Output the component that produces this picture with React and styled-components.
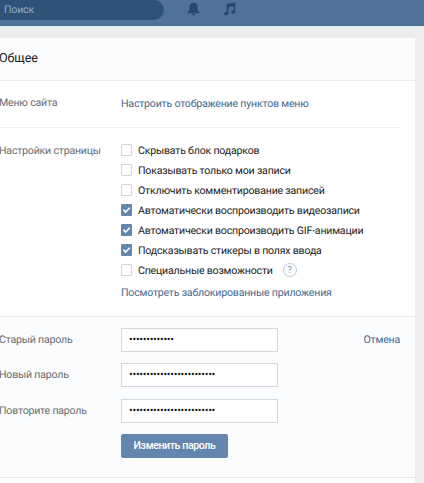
import React from "react";
import styled, { createGlobalStyle } from "styled-components";

const options = [
  { label: "Скрывать блок подарков" },
  { label: "Показывать только мои записи" },
  { label: "Отключить комментирование записей" },
  { label: "Автоматически воспроизводить видеозаписи", checked: true },
  { label: "Автоматически воспроизводить GIF-анимации", checked: true },
  { label: "Подсказывать стикеры в полях ввода", checked: true },
  { label: "Специальные возможности", help: true },
];

const App = () => {
  return (
    <>
      <GlobalStyle />
      <Page>
        <Topbar>
          <Search>Поиск</Search>
          <BellIcon viewBox="0 0 14 14">
            <path d="M7 0.2c-3 0-4.4 2.1-4.4 4.6v3L0.5 10.6v0.9h13v-0.9l-2.1-2.8v-3C11.4 2.3 10 0.2 7 0.2zM5 12.2c.3 1.2 1.1 1.7 2 1.7s1.7-.5 2-1.7z" />
          </BellIcon>
          <MusicIcon viewBox="0 0 14 14">
            <path d="M4 1.3 13.2 0v9.6c0 1.5-1 2.5-2.5 2.5-1.2 0-2-.7-2-1.7 0-1.2 1-2 2.5-2.1V4.2L6 5v6.3c0 1.6-1.1 2.6-2.7 2.6-1.2 0-2.1-.7-2.1-1.7 0-1.3 1.1-2.1 2.8-2.2z" />
          </MusicIcon>
        </Topbar>
        <Panel>
          <PanelHeader>Общее</PanelHeader>
          <MenuRow>
            <Label>Меню сайта</Label>
            <Link href="#">Настроить отображение пунктов меню</Link>
          </MenuRow>
          <SettingsRow>
            <Label>Настройки страницы</Label>
            <Options>
              {options.map((option) => (
                <Option key={option.label}>
                  <Checkbox $checked={option.checked}>
                    {option.checked && (
                      <svg viewBox="0 0 12 12">
                        <path d="M2.6 5.6 5 8.2 9.6 3.6" />
                      </svg>
                    )}
                  </Checkbox>
                  <OptionText>{option.label}</OptionText>
                  {option.help && <Help>?</Help>}
                </Option>
              ))}
              <BlockedLink href="#">Посмотреть заблокированные приложения</BlockedLink>
            </Options>
          </SettingsRow>
          <PasswordSection>
            <Field $gap={11}>
              <Label>Старый пароль</Label>
              <Input>{"•".repeat(13)}</Input>
              <Cancel href="#">Отмена</Cancel>
            </Field>
            <Field $gap={12}>
              <Label>Новый пароль</Label>
              <Input>{"•".repeat(25)}</Input>
            </Field>
            <Field $gap={11}>
              <Label>Повторите пароль</Label>
              <Input>{"•".repeat(25)}</Input>
            </Field>
            <Button>Изменить пароль</Button>
          </PasswordSection>
        </Panel>
      </Page>
    </>
  );
};

const GlobalStyle = createGlobalStyle`
  * {
    box-sizing: border-box;
  }

  body {
    margin: 0;
    background-color: #ebedef;
  }
`;

const Page = styled.div`
  width: 424px;
  height: 483px;
  overflow: hidden;
  background-color: #ebedef;
  font-family: Roboto, sans-serif;
  font-size: 10.6px;
  letter-spacing: -0.21px;
  line-height: 14px;
  color: #222;
  text-rendering: geometricPrecision;
  white-space: nowrap;
`;

const Topbar = styled.header`
  display: flex;
  align-items: flex-start;
  height: 26px;
  background-color: #507299;
`;

const Search = styled.div`
  width: 164px;
  height: 20px;
  padding: 3px 0 0 4px;
  border-radius: 0 10px 10px 0;
  background-color: #2f5278;
  color: #91adca;
`;

const BellIcon = styled.svg`
  width: 13px;
  height: 14px;
  margin: 2px 0 0 23px;
  fill: #27496f;
`;

const MusicIcon = styled.svg`
  width: 13px;
  height: 14px;
  margin: 2px 0 0 23px;
  fill: #27496f;
`;

const Panel = styled.main`
  width: 415px;
  height: 445px;
  margin-top: 12px;
  background-color: #fff;
`;

const PanelHeader = styled.h1`
  height: 43px;
  margin: 0;
  padding: 13px 0 0 0;
  border-bottom: 1px solid #e9ebee;
  background-color: #fafcfe;
  font-size: 12.6px;
  font-weight: 400;
  letter-spacing: -0.1px;
  line-height: 16px;
  text-indent: -1px;
`;

const Label = styled.div`
  width: 121px;
  flex: none;
  color: #686c70;
  text-indent: -1px;
`;

const Link = styled.a`
  color: #45688e;
  text-decoration: none;
`;

const MenuRow = styled.div`
  display: flex;
  height: 47px;
  margin-right: 15px;
  padding-top: 15px;
  border-bottom: 1px solid #eeeff1;

  ${Link} {
    padding-top: 1px;
  }
`;

const SettingsRow = styled.div`
  display: flex;
  height: 188px;
  padding-top: 12px;

  > ${Label} {
    padding-top: 4px;
  }
`;

const Options = styled.div`
  display: flex;
  flex-direction: column;
  align-items: flex-start;
`;

const Option = styled.label`
  display: flex;
  align-items: center;
  height: 20px;
`;

const OptionText = styled.span`
  padding-top: 2px;
`;

const Checkbox = styled.span`
  width: 11px;
  height: 12px;
  margin-right: 6px;
  border: 1px solid ${(props) => (props.$checked ? "#6287ae" : "#d2d7dc")};
  border-radius: 1px;
  background-color: ${(props) => (props.$checked ? "#6287ae" : "#fff")};

  svg {
    display: block;
    width: 11px;
    height: 12px;
    margin: -1px;
    fill: none;
    stroke: #fff;
    stroke-width: 1.7;
  }
`;

const Help = styled.span`
  width: 14px;
  height: 14px;
  margin-left: 10px;
  border: 1px solid #bac7d4;
  border-radius: 50%;
  color: #8299b1;
  font-size: 10px;
  letter-spacing: 0;
  line-height: 13px;
  text-align: center;
`;

const BlockedLink = styled(Link)`
  margin-top: 6px;
`;

const PasswordSection = styled.section`
  height: 162px;
  padding: 11px 0 0;
  border-top: 1px solid #e4e8ec;
  border-bottom: 1px solid #e4e8ec;
  background-color: #fafcfe;
`;

const Field = styled.div`
  display: flex;
  height: 24px;
  margin-bottom: ${(props) => props.$gap}px;

  ${Label} {
    padding-top: 5px;
  }
`;

const Input = styled.div`
  width: 157px;
  height: 24px;
  padding: 4px 0 0 7px;
  border: 1px solid #d3d9de;
  background-color: #fff;
  color: #111;
  font-size: 11px;
  letter-spacing: -0.27px;
`;

const Cancel = styled(Link)`
  margin: 5px 15px 0 auto;
`;

const Button = styled.button`
  width: 107px;
  height: 24px;
  margin-left: 121px;
  padding: 0 0 2px;
  border: 0;
  border-radius: 2px;
  background-color: #6485ad;
  color: #fff;
  font-family: Roboto, sans-serif;
  font-size: 10.6px;
  font-weight: 500;
  letter-spacing: -0.4px;
`;

export default App;
